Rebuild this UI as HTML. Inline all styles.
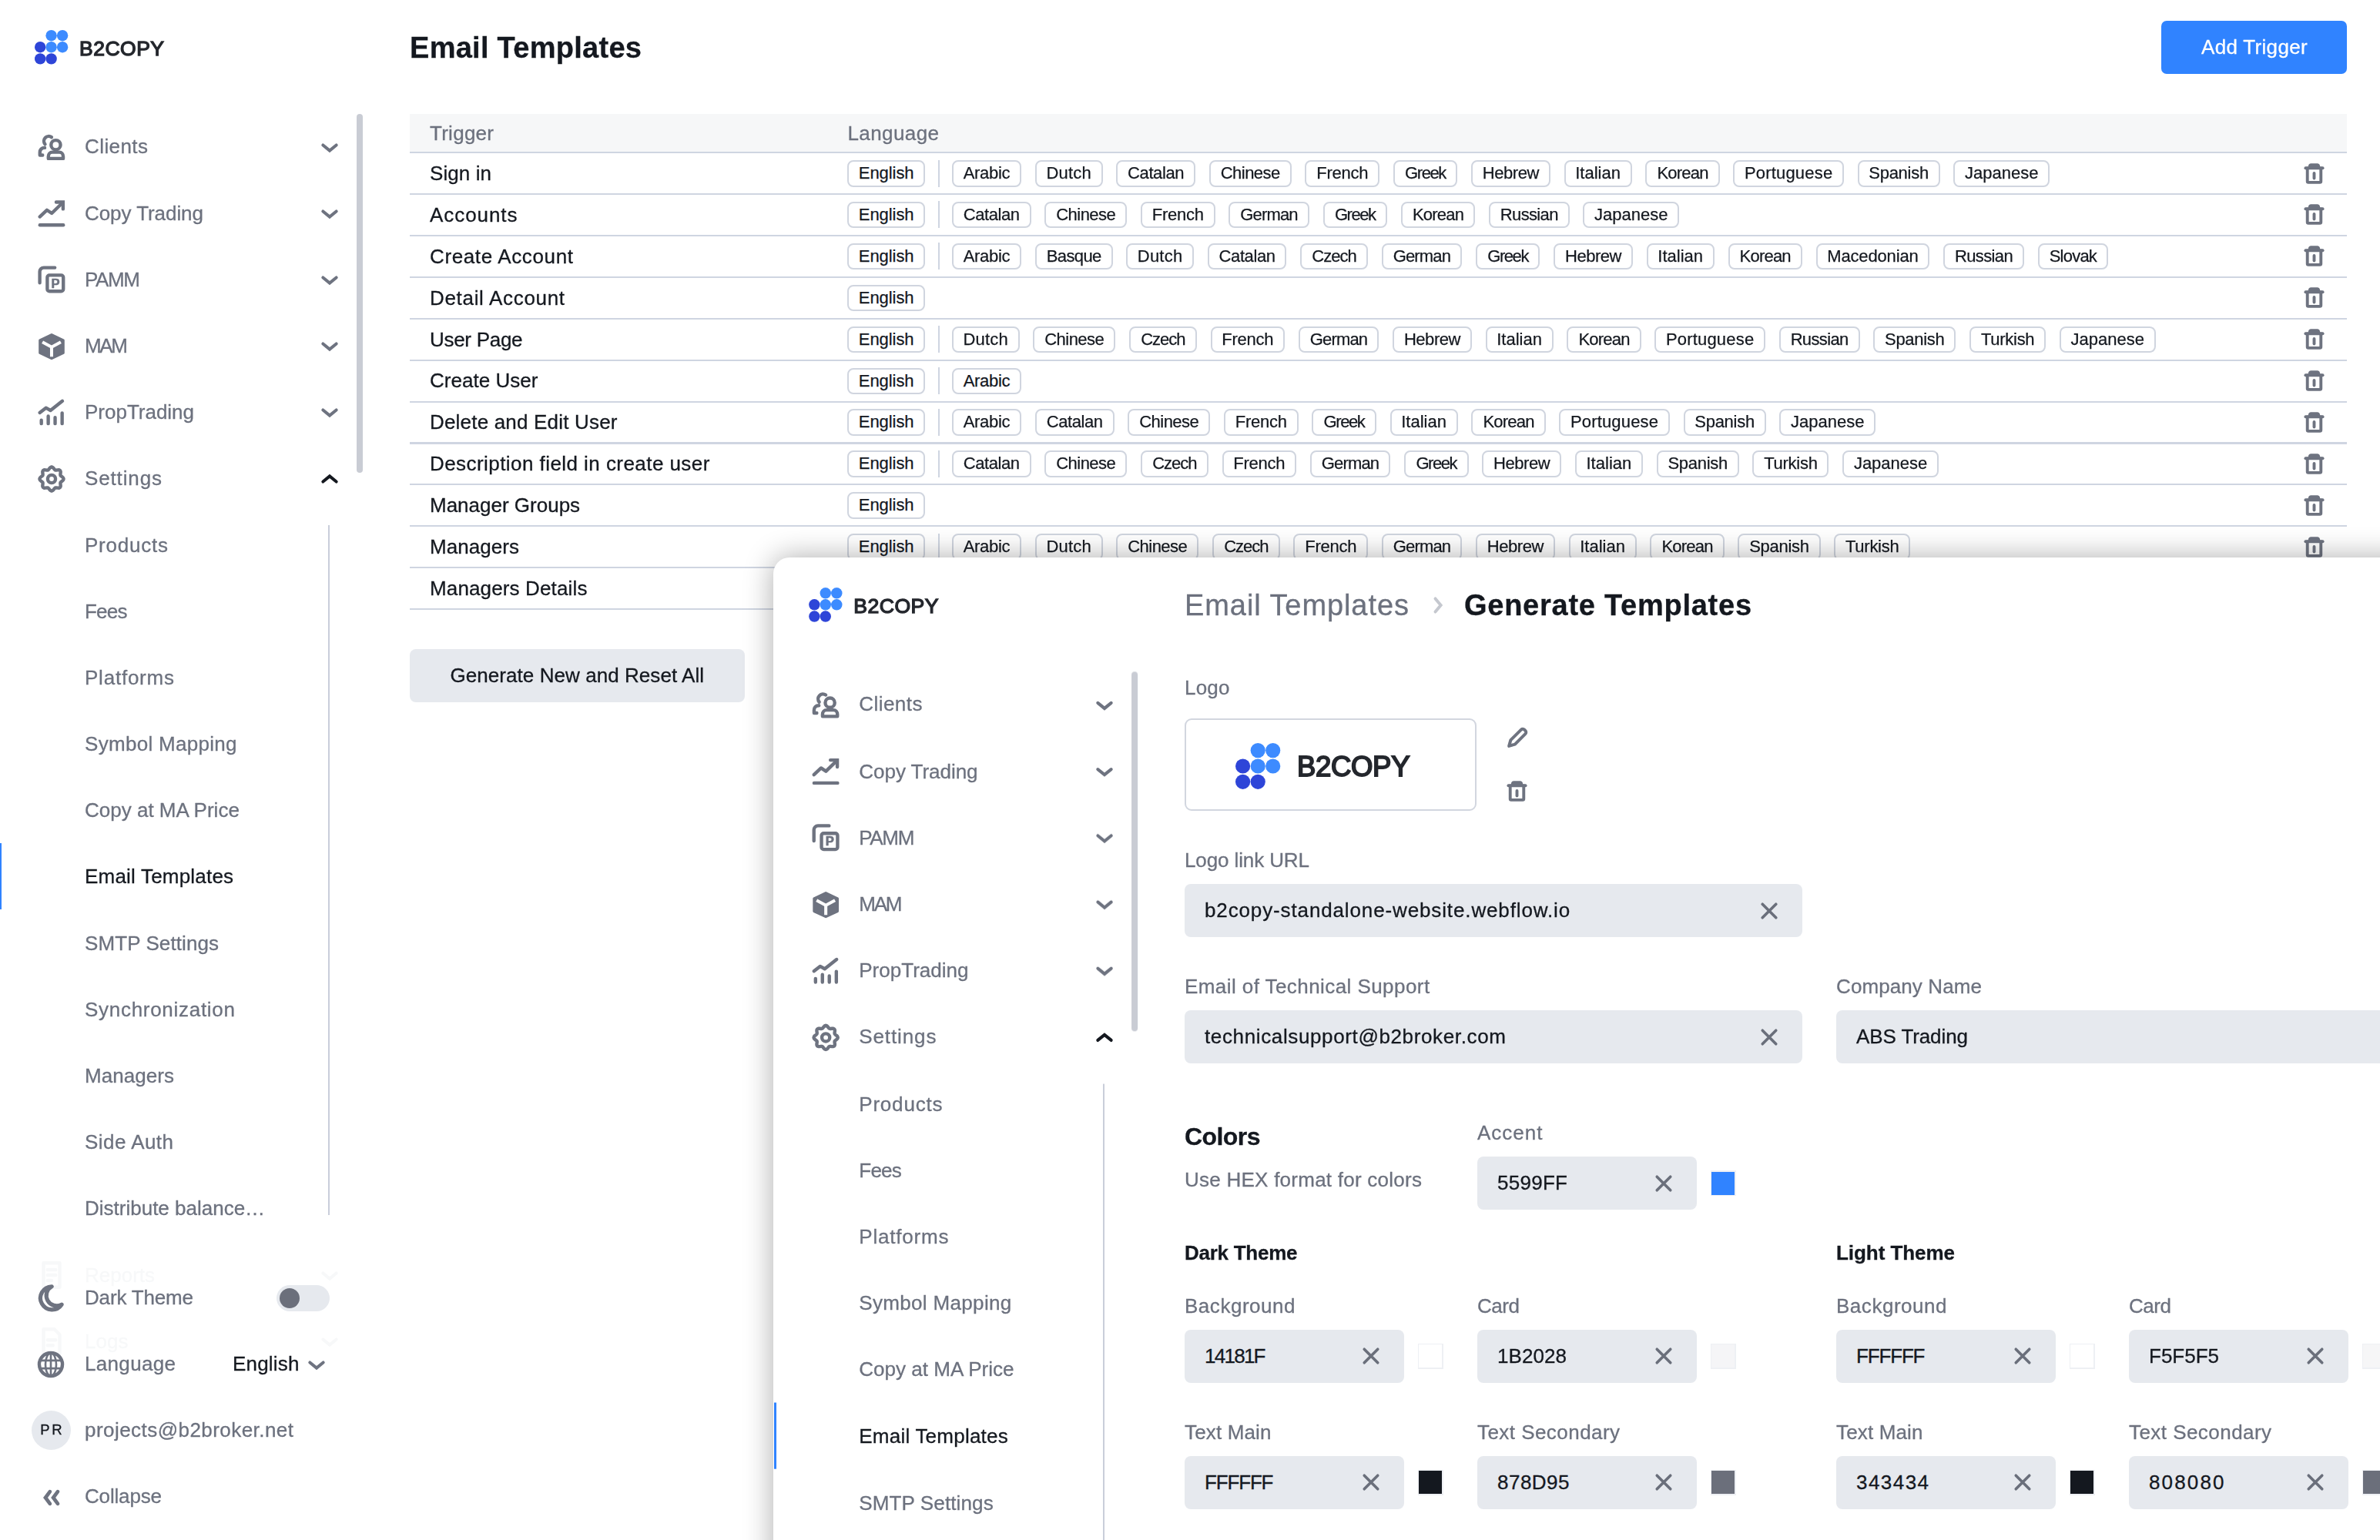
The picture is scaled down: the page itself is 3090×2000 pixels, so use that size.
<!DOCTYPE html>
<html lang="en"><head><meta charset="utf-8"><title>Email Templates</title><style>
html,body{margin:0;padding:0;background:#fff}
body{width:3090px;height:2000px;overflow:hidden;position:relative;font-family:"Liberation Sans",sans-serif}
.t{position:absolute;white-space:nowrap;height:40px;line-height:40px;-webkit-text-stroke:0.3px currentColor}
.b{position:absolute}
.i{position:absolute;overflow:visible}
.tag{position:absolute;box-sizing:border-box;height:34.5px;line-height:29px;border:2px solid #d0d5df;border-radius:8px;font-size:22px;color:#14181f;text-align:center;white-space:nowrap;background:#fff;-webkit-text-stroke:0.25px currentColor}
.popup{position:absolute;left:1004px;top:724px;width:2200px;height:1400px;background:#fff;border-radius:21px 0 0 0;box-shadow:0 0 38px rgba(0,0,0,.33);overflow:hidden}
.page{position:absolute;left:0;top:0;width:3090px;height:2000px;overflow:hidden;filter:blur(0.5px)}
</style></head>
<body><div class="page">
<div class="side"><svg class="i" style="left:44.5px;top:39.0px" width="43.3" height="44.5" viewBox="0 0 43.3 44.5"><circle cx="21.6" cy="7.2" r="7.2" fill="#3d8bff"/><circle cx="36.1" cy="7.2" r="7.2" fill="#3d8bff"/><circle cx="7.2" cy="22.2" r="7.2" fill="#2e45d8"/><circle cx="21.6" cy="22.2" r="7.2" fill="#3d8bff"/><circle cx="36.1" cy="22.2" r="7.2" fill="#3d8bff"/><circle cx="7.2" cy="37.4" r="7.2" fill="#2e45d8"/><circle cx="21.6" cy="37.4" r="7.2" fill="#2e45d8"/></svg><div class="t" style="left:103.0px;top:43.0px;font-size:26.5px;color:#24272d;letter-spacing:0.50px;-webkit-text-stroke:1.35px #24272d;">B2COPY</div><svg class="i" style="left:45.5px;top:170.0px" width="42" height="42" viewBox="0 0 24 24" fill="none" stroke="#6e7380" stroke-width="2.5" stroke-linecap="round" stroke-linejoin="round" ><circle cx="15.100" cy="10.400" r="3.500"/><path d="M9.600 20.500v-1.500c0-1.900 1.300-3.200 2.900-3.200h5.200c1.600 0 2.900 1.300 2.900 3.200v1.500z"/><path d="M11.960 4.650A3.600 3.600 0 0 0 7.140 9.910"/><path d="M6.900 12.500C4.500 12.500 3.300 14 3.300 16V18H5.300"/></svg><div class="t" style="left:110.0px;top:170.4px;font-size:26px;color:#6c717e;letter-spacing:0.42px;">Clients</div><svg class="i" style="left:410.2px;top:173.5px" width="36" height="36" viewBox="0 0 24 24" fill="none" stroke="#6e7380" stroke-width="2.75" stroke-linecap="round" stroke-linejoin="round" ><path d="M6.240 9.650L12 14.350L17.760 9.650" stroke-linejoin="miter"/></svg><svg class="i" style="left:45.5px;top:256.2px" width="42" height="42" viewBox="0 0 24 24" fill="none" stroke="#6e7380" stroke-width="2.5" stroke-linecap="round" stroke-linejoin="round" ><path d="M3.200 14.600l5.300-5 3.600 2.400 7.900-7.700"/><path d="M15.400 3.700h5.100v5.100" stroke-linejoin="miter"/><path d="M3.300 20.700h17.400"/></svg><div class="t" style="left:110.0px;top:256.6px;font-size:26px;color:#6c717e;letter-spacing:-0.06px;">Copy Trading</div><svg class="i" style="left:410.2px;top:259.7px" width="36" height="36" viewBox="0 0 24 24" fill="none" stroke="#6e7380" stroke-width="2.75" stroke-linecap="round" stroke-linejoin="round" ><path d="M6.240 9.650L12 14.350L17.760 9.650" stroke-linejoin="miter"/></svg><svg class="i" style="left:45.5px;top:342.4px" width="42" height="42" viewBox="0 0 24 24" fill="none" stroke="#6e7380" stroke-width="2.5" stroke-linecap="round" stroke-linejoin="round" ><path d="M3.2 14.4V6.2a3 3 0 0 1 3-3h8.2"/><rect x="8.8" y="8.8" width="11.9" height="11.9" rx="1.6"/><text x="14.900" y="18.050" text-anchor="middle" font-family="Liberation Sans, sans-serif" font-weight="700" font-size="9.500" fill="#6e7380" stroke="#6e7380" stroke-width="0.300">P</text></svg><div class="t" style="left:110.0px;top:342.8px;font-size:26px;color:#6c717e;letter-spacing:-1.36px;">PAMM</div><svg class="i" style="left:410.2px;top:345.9px" width="36" height="36" viewBox="0 0 24 24" fill="none" stroke="#6e7380" stroke-width="2.75" stroke-linecap="round" stroke-linejoin="round" ><path d="M6.240 9.650L12 14.350L17.760 9.650" stroke-linejoin="miter"/></svg><svg class="i" style="left:45.5px;top:428.5px" width="42" height="42" viewBox="0 0 24 24" fill="none" stroke="#6e7380" stroke-width="2.5" stroke-linecap="round" stroke-linejoin="round" ><path d="M12 3.200L20.700 7.400V16.800L12 20.900L3.300 16.800V7.400z" fill="#6e7380" stroke-width="1.800"/><path d="M5.200 8.650L12 12.400l6.800-3.750M12 12.400v7.200" stroke="#fff" stroke-width="2.300" stroke-linecap="butt" stroke-linejoin="miter"/></svg><div class="t" style="left:110.0px;top:429.0px;font-size:26px;color:#6c717e;letter-spacing:-2.33px;">MAM</div><svg class="i" style="left:410.2px;top:432.0px" width="36" height="36" viewBox="0 0 24 24" fill="none" stroke="#6e7380" stroke-width="2.75" stroke-linecap="round" stroke-linejoin="round" ><path d="M6.240 9.650L12 14.350L17.760 9.650" stroke-linejoin="miter"/></svg><svg class="i" style="left:45.5px;top:514.7px" width="42" height="42" viewBox="0 0 24 24" fill="none" stroke="#6e7380" stroke-width="2.5" stroke-linecap="round" stroke-linejoin="round" ><path d="M3.200 9.800l4.600-3.600 3.400 1.900 8.800-7.000" transform="translate(0 2.2)"/><path d="M4.400 17.600v2.500M9.500 14.600v5.500M14.600 15.600v4.500M19.800 12.200v7.900"/></svg><div class="t" style="left:110.0px;top:515.1px;font-size:26px;color:#6c717e;letter-spacing:-0.01px;">PropTrading</div><svg class="i" style="left:410.2px;top:518.2px" width="36" height="36" viewBox="0 0 24 24" fill="none" stroke="#6e7380" stroke-width="2.75" stroke-linecap="round" stroke-linejoin="round" ><path d="M6.240 9.650L12 14.350L17.760 9.650" stroke-linejoin="miter"/></svg><svg class="i" style="left:45.5px;top:600.9px" width="42" height="42" viewBox="0 0 24 24" fill="none" stroke="#6e7380" stroke-width="2.5" stroke-linecap="round" stroke-linejoin="round" ><path d="M12.00 3.10L12.85 3.41L13.56 4.15L14.14 4.95L14.72 5.44L15.47 5.51L16.44 5.35L17.48 5.32L18.29 5.71L18.68 6.52L18.65 7.56L18.49 8.53L18.56 9.28L19.05 9.86L19.85 10.44L20.59 11.15L20.90 12.00L20.59 12.85L19.85 13.56L19.05 14.14L18.56 14.72L18.49 15.47L18.65 16.44L18.68 17.48L18.29 18.29L17.48 18.68L16.44 18.65L15.47 18.49L14.72 18.56L14.14 19.05L13.56 19.85L12.85 20.59L12.00 20.90L11.15 20.59L10.44 19.85L9.86 19.05L9.28 18.56L8.53 18.49L7.56 18.65L6.52 18.68L5.71 18.29L5.32 17.48L5.35 16.44L5.51 15.47L5.44 14.72L4.95 14.14L4.15 13.56L3.41 12.85L3.10 12.00L3.41 11.15L4.15 10.44L4.95 9.86L5.44 9.28L5.51 8.53L5.35 7.56L5.32 6.52L5.71 5.71L6.52 5.32L7.56 5.35L8.53 5.51L9.28 5.44L9.86 4.95L10.44 4.15L11.15 3.41L12.00 3.10z"/><circle cx="12" cy="12" r="2.900"/></svg><div class="t" style="left:110.0px;top:601.3px;font-size:26px;color:#6c717e;letter-spacing:0.86px;">Settings</div><svg class="i" style="left:410.2px;top:604.4px" width="36" height="36" viewBox="0 0 24 24" fill="none" stroke="#14181f" stroke-width="2.75" stroke-linecap="round" stroke-linejoin="round" ><path d="M6.240 14.350L12 9.650L17.760 14.350" stroke-linejoin="miter"/></svg><div class="t" style="left:110.0px;top:687.5px;font-size:26px;color:#6c717e;letter-spacing:0.77px;">Products</div><div class="t" style="left:110.0px;top:773.7px;font-size:26px;color:#6c717e;letter-spacing:-0.77px;">Fees</div><div class="t" style="left:110.0px;top:859.9px;font-size:26px;color:#6c717e;letter-spacing:0.77px;">Platforms</div><div class="t" style="left:110.0px;top:946.0px;font-size:26px;color:#6c717e;letter-spacing:0.30px;">Symbol Mapping</div><div class="t" style="left:110.0px;top:1032.2px;font-size:26px;color:#6c717e;">Copy at MA Price</div><div class="t" style="left:110.0px;top:1118.4px;font-size:26px;color:#14181f;letter-spacing:0.20px;">Email Templates</div><div class="t" style="left:110.0px;top:1204.6px;font-size:26px;color:#6c717e;letter-spacing:0.09px;">SMTP Settings</div><div class="t" style="left:110.0px;top:1290.8px;font-size:26px;color:#6c717e;letter-spacing:0.71px;">Synchronization</div><div class="t" style="left:110.0px;top:1376.9px;font-size:26px;color:#6c717e;letter-spacing:0.05px;">Managers</div><div class="t" style="left:110.0px;top:1463.1px;font-size:26px;color:#6c717e;letter-spacing:0.46px;">Side Auth</div><div class="t" style="left:110.0px;top:1549.3px;font-size:26px;color:#6c717e;">Distribute balance…</div><svg class="i" style="left:45.5px;top:1635.1px" width="42" height="42" viewBox="0 0 24 24" fill="none" stroke="#f7f8f9" stroke-width="2.5" stroke-linecap="round" stroke-linejoin="round" ><path d="M6 3h12v18H6zM9 8h6M9 12h6M9 16h3"/></svg><div class="t" style="left:110.0px;top:1635.5px;font-size:26px;color:#f7f8f9;">Reports</div><svg class="i" style="left:410.2px;top:1638.6px" width="36" height="36" viewBox="0 0 24 24" fill="none" stroke="#f7f8f9" stroke-width="2.75" stroke-linecap="round" stroke-linejoin="round" ><path d="M6.240 9.650L12 14.350L17.760 9.650" stroke-linejoin="miter"/></svg><svg class="i" style="left:45.5px;top:1721.2px" width="42" height="42" viewBox="0 0 24 24" fill="none" stroke="#f7f8f9" stroke-width="2.5" stroke-linecap="round" stroke-linejoin="round" ><path d="M6 3h8l4 4v14H6zM9 11h6M9 15h4"/></svg><div class="t" style="left:110.0px;top:1721.7px;font-size:26px;color:#f7f8f9;">Logs</div><svg class="i" style="left:410.2px;top:1724.7px" width="36" height="36" viewBox="0 0 24 24" fill="none" stroke="#f7f8f9" stroke-width="2.75" stroke-linecap="round" stroke-linejoin="round" ><path d="M6.240 9.650L12 14.350L17.760 9.650" stroke-linejoin="miter"/></svg><div class="b" style="left:463.2px;top:148px;width:7.6px;height:466px;border-radius:4px;background:#c9ccd4"></div><div class="b" style="left:426.3px;top:682px;width:1.6px;height:896px;background:#c9ceda"></div><div class="b" style="left:0;top:1095px;width:2.2px;height:86px;background:#3083ff"></div><svg class="i" style="left:44.0px;top:1665.0px" width="42" height="42" viewBox="0 0 24 24" fill="none" stroke="#6e7380" stroke-width="3" stroke-linecap="round" stroke-linejoin="round" ><path d="M13.200 3.300a8.600 8.600 0 1 0 7.400 13.400a7.600 7.600 0 0 1-7.400-13.400z"/></svg><div class="t" style="left:110.0px;top:1665.4px;font-size:26px;color:#6c717e;letter-spacing:-0.17px;">Dark Theme</div><div class="b" style="left:359px;top:1669px;width:69px;height:34px;border-radius:17px;background:#e6e9ee"></div><div class="b" style="left:363.3px;top:1673px;width:26px;height:26px;border-radius:13px;background:#6b6f7b"></div><svg class="i" style="left:45.0px;top:1751.0px" width="42" height="42" viewBox="0 0 24 24" fill="none" stroke="#6e7380" stroke-width="2.5" stroke-linecap="round" stroke-linejoin="round" ><circle cx="12" cy="12" r="8.600"/><path d="M12 3.500v17M4.200 9.100h15.600M4.200 14.900h15.600" stroke-width="1.500" stroke-linecap="butt"/><ellipse cx="12" cy="12" rx="4" ry="8.500" stroke-width="1.500"/></svg><div class="t" style="left:110.0px;top:1751.4px;font-size:26px;color:#6c717e;letter-spacing:0.33px;">Language</div><div class="t" style="left:302.0px;top:1751.4px;font-size:26px;color:#14181f;letter-spacing:0.20px;">English</div><svg class="i" style="left:393.0px;top:1754.5px" width="36" height="36" viewBox="0 0 24 24" fill="none" stroke="#6e7380" stroke-width="2.75" stroke-linecap="round" stroke-linejoin="round" ><path d="M6.240 9.650L12 14.350L17.760 9.650" stroke-linejoin="miter"/></svg><div class="b" style="left:40.8px;top:1832.3px;width:51px;height:51px;border-radius:26px;background:#e6e9ee"></div><div class="t" style="left:52.3px;top:1837.3px;font-size:18.5px;color:#14181f;letter-spacing:2.60px;">PR</div><div class="t" style="left:110.0px;top:1837.4px;font-size:26px;color:#6c717e;letter-spacing:0.45px;">projects@b2broker.net</div><svg class="i" style="left:47.5px;top:1925.7px" width="38" height="38" viewBox="0 0 24 24" fill="none" stroke="#6e7380" stroke-width="3.0" stroke-linecap="round" stroke-linejoin="round" ><path d="M10.650 7.050L6.950 12l3.700 4.950M17.050 7.050L13.350 12l3.700 4.950" stroke-linejoin="miter"/></svg><div class="t" style="left:110.0px;top:1923.4px;font-size:26px;color:#6c717e;letter-spacing:-0.17px;">Collapse</div></div>
<div class="main"><div class="t" style="left:532.0px;top:41.8px;font-size:38px;color:#14181f;font-weight:700;letter-spacing:0.28px;">Email Templates</div><div class="b" style="left:2806px;top:27px;width:241.4px;height:69px;border-radius:7px;background:#3083ff"></div><div class="t" style="left:2858.0px;top:41.4px;font-size:26px;color:#fff;letter-spacing:0.32px;">Add Trigger</div><div class="b" style="left:531.7px;top:148px;width:2515.7px;height:50px;background:#f6f7f8"></div><div class="t" style="left:558.0px;top:152.7px;font-size:26px;color:#6c717e;letter-spacing:0.27px;">Trigger</div><div class="t" style="left:1100.5px;top:152.7px;font-size:26px;color:#6c717e;letter-spacing:0.40px;">Language</div><div class="b" style="left:531.7px;top:197.3px;width:2515.7px;height:2.2px;background:#cfd5e1"></div><div class="t" style="left:558.0px;top:204.9px;font-size:26px;color:#14181f;letter-spacing:0.08px;">Sign in</div><div class="b" style="left:531.7px;top:251.0px;width:2515.7px;height:2.2px;background:#cfd5e1"></div><div class="tag" style="left:1100.1px;top:208.0px;width:101.2px;letter-spacing:-0.06px">English</div><div class="b" style="left:1217.6px;top:207.5px;width:2px;height:35px;background:#cfd5e1"></div><div class="tag" style="left:1235.8px;top:208.0px;width:90.3px;letter-spacing:-0.29px">Arabic</div><div class="tag" style="left:1343.8px;top:208.0px;width:87.8px;letter-spacing:0.23px">Dutch</div><div class="tag" style="left:1449.2px;top:208.0px;width:102.8px;letter-spacing:-0.40px">Catalan</div><div class="tag" style="left:1569.7px;top:208.0px;width:107.1px;letter-spacing:-0.50px">Chinese</div><div class="tag" style="left:1694.4px;top:208.0px;width:96.6px;letter-spacing:-0.25px">French</div><div class="tag" style="left:1808.7px;top:208.0px;width:83.6px;letter-spacing:-1.43px">Greek</div><div class="tag" style="left:1909.9px;top:208.0px;width:102.9px;letter-spacing:-0.46px">Hebrew</div><div class="tag" style="left:2030.5px;top:208.0px;width:88.2px;letter-spacing:0.02px">Italian</div><div class="tag" style="left:2136.3px;top:208.0px;width:96.4px;letter-spacing:-0.79px">Korean</div><div class="tag" style="left:2250.4px;top:208.0px;width:143.5px;letter-spacing:0.18px">Portuguese</div><div class="tag" style="left:2411.5px;top:208.0px;width:107.2px;letter-spacing:-0.28px">Spanish</div><div class="tag" style="left:2536.4px;top:208.0px;width:124.8px;letter-spacing:-0.00px">Japanese</div><svg class="i" style="left:2988.5px;top:209.5px" width="31" height="31" viewBox="0 0 24 24" fill="none" stroke="#6e7380" stroke-width="3.0" stroke-linecap="round" stroke-linejoin="round" ><path d="M3.400 6.400h17.200"/><path d="M7.600 5.400V4.400a1.200 1.200 0 0 1 1.200-1.200h6.400a1.200 1.200 0 0 1 1.200 1.200v1" fill="#6e7380"/><path d="M5.200 6.600v13.200a1 1 0 0 0 1 1h11.600a1 1 0 0 0 1-1V6.600"/><path d="M12 11.600v5" /></svg><div class="t" style="left:558.0px;top:258.8px;font-size:26px;color:#14181f;letter-spacing:0.94px;">Accounts</div><div class="b" style="left:531.7px;top:304.9px;width:2515.7px;height:2.2px;background:#cfd5e1"></div><div class="tag" style="left:1100.1px;top:261.9px;width:101.2px;letter-spacing:-0.06px">English</div><div class="b" style="left:1217.6px;top:261.4px;width:2px;height:35px;background:#cfd5e1"></div><div class="tag" style="left:1235.8px;top:261.9px;width:102.8px;letter-spacing:-0.40px">Catalan</div><div class="tag" style="left:1356.2px;top:261.9px;width:107.1px;letter-spacing:-0.50px">Chinese</div><div class="tag" style="left:1481.0px;top:261.9px;width:96.6px;letter-spacing:-0.25px">French</div><div class="tag" style="left:1595.2px;top:261.9px;width:104.6px;letter-spacing:-0.85px">German</div><div class="tag" style="left:1717.5px;top:261.9px;width:83.6px;letter-spacing:-1.43px">Greek</div><div class="tag" style="left:1818.8px;top:261.9px;width:96.4px;letter-spacing:-0.79px">Korean</div><div class="tag" style="left:1932.8px;top:261.9px;width:105.0px;letter-spacing:-0.65px">Russian</div><div class="tag" style="left:2055.4px;top:261.9px;width:124.8px;letter-spacing:-0.00px">Japanese</div><svg class="i" style="left:2988.5px;top:263.4px" width="31" height="31" viewBox="0 0 24 24" fill="none" stroke="#6e7380" stroke-width="3.0" stroke-linecap="round" stroke-linejoin="round" ><path d="M3.400 6.400h17.200"/><path d="M7.600 5.400V4.400a1.200 1.200 0 0 1 1.200-1.200h6.400a1.200 1.200 0 0 1 1.200 1.200v1" fill="#6e7380"/><path d="M5.200 6.600v13.200a1 1 0 0 0 1 1h11.600a1 1 0 0 0 1-1V6.600"/><path d="M12 11.600v5" /></svg><div class="t" style="left:558.0px;top:312.7px;font-size:26px;color:#14181f;letter-spacing:0.63px;">Create Account</div><div class="b" style="left:531.7px;top:358.8px;width:2515.7px;height:2.2px;background:#cfd5e1"></div><div class="tag" style="left:1100.1px;top:315.8px;width:101.2px;letter-spacing:-0.06px">English</div><div class="b" style="left:1217.6px;top:315.3px;width:2px;height:35px;background:#cfd5e1"></div><div class="tag" style="left:1235.8px;top:315.8px;width:90.3px;letter-spacing:-0.29px">Arabic</div><div class="tag" style="left:1343.8px;top:315.8px;width:100.8px;letter-spacing:-0.64px">Basque</div><div class="tag" style="left:1462.2px;top:315.8px;width:87.8px;letter-spacing:0.23px">Dutch</div><div class="tag" style="left:1567.7px;top:315.8px;width:102.8px;letter-spacing:-0.40px">Catalan</div><div class="tag" style="left:1688.1px;top:315.8px;width:87.8px;letter-spacing:-0.99px">Czech</div><div class="tag" style="left:1793.6px;top:315.8px;width:104.6px;letter-spacing:-0.85px">German</div><div class="tag" style="left:1915.8px;top:315.8px;width:83.6px;letter-spacing:-1.43px">Greek</div><div class="tag" style="left:2017.1px;top:315.8px;width:102.9px;letter-spacing:-0.46px">Hebrew</div><div class="tag" style="left:2137.6px;top:315.8px;width:88.2px;letter-spacing:0.02px">Italian</div><div class="tag" style="left:2243.5px;top:315.8px;width:96.4px;letter-spacing:-0.79px">Korean</div><div class="tag" style="left:2357.5px;top:315.8px;width:147.8px;letter-spacing:-0.16px">Macedonian</div><div class="tag" style="left:2523.0px;top:315.8px;width:105.0px;letter-spacing:-0.65px">Russian</div><div class="tag" style="left:2645.6px;top:315.8px;width:91.6px;letter-spacing:-0.77px">Slovak</div><svg class="i" style="left:2988.5px;top:317.3px" width="31" height="31" viewBox="0 0 24 24" fill="none" stroke="#6e7380" stroke-width="3.0" stroke-linecap="round" stroke-linejoin="round" ><path d="M3.400 6.400h17.200"/><path d="M7.600 5.400V4.400a1.200 1.200 0 0 1 1.200-1.200h6.400a1.200 1.200 0 0 1 1.200 1.200v1" fill="#6e7380"/><path d="M5.200 6.600v13.200a1 1 0 0 0 1 1h11.600a1 1 0 0 0 1-1V6.600"/><path d="M12 11.600v5" /></svg><div class="t" style="left:558.0px;top:366.6px;font-size:26px;color:#14181f;letter-spacing:0.68px;">Detail Account</div><div class="b" style="left:531.7px;top:412.7px;width:2515.7px;height:2.2px;background:#cfd5e1"></div><div class="tag" style="left:1100.1px;top:369.7px;width:101.2px;letter-spacing:-0.06px">English</div><svg class="i" style="left:2988.5px;top:371.2px" width="31" height="31" viewBox="0 0 24 24" fill="none" stroke="#6e7380" stroke-width="3.0" stroke-linecap="round" stroke-linejoin="round" ><path d="M3.400 6.400h17.200"/><path d="M7.600 5.400V4.400a1.200 1.200 0 0 1 1.200-1.200h6.400a1.200 1.200 0 0 1 1.200 1.200v1" fill="#6e7380"/><path d="M5.200 6.600v13.200a1 1 0 0 0 1 1h11.600a1 1 0 0 0 1-1V6.600"/><path d="M12 11.600v5" /></svg><div class="t" style="left:558.0px;top:420.5px;font-size:26px;color:#14181f;letter-spacing:-0.29px;">User Page</div><div class="b" style="left:531.7px;top:466.6px;width:2515.7px;height:2.2px;background:#cfd5e1"></div><div class="tag" style="left:1100.1px;top:423.6px;width:101.2px;letter-spacing:-0.06px">English</div><div class="b" style="left:1217.6px;top:423.1px;width:2px;height:35px;background:#cfd5e1"></div><div class="tag" style="left:1235.8px;top:423.6px;width:87.8px;letter-spacing:0.23px">Dutch</div><div class="tag" style="left:1341.2px;top:423.6px;width:107.1px;letter-spacing:-0.50px">Chinese</div><div class="tag" style="left:1466.0px;top:423.6px;width:87.8px;letter-spacing:-0.99px">Czech</div><div class="tag" style="left:1571.5px;top:423.6px;width:96.6px;letter-spacing:-0.25px">French</div><div class="tag" style="left:1685.7px;top:423.6px;width:104.6px;letter-spacing:-0.85px">German</div><div class="tag" style="left:1808.0px;top:423.6px;width:102.9px;letter-spacing:-0.46px">Hebrew</div><div class="tag" style="left:1928.5px;top:423.6px;width:88.2px;letter-spacing:0.02px">Italian</div><div class="tag" style="left:2034.3px;top:423.6px;width:96.4px;letter-spacing:-0.79px">Korean</div><div class="tag" style="left:2148.4px;top:423.6px;width:143.5px;letter-spacing:0.18px">Portuguese</div><div class="tag" style="left:2309.6px;top:423.6px;width:105.0px;letter-spacing:-0.65px">Russian</div><div class="tag" style="left:2432.2px;top:423.6px;width:107.2px;letter-spacing:-0.28px">Spanish</div><div class="tag" style="left:2557.1px;top:423.6px;width:99.1px;letter-spacing:-0.27px">Turkish</div><div class="tag" style="left:2673.8px;top:423.6px;width:124.8px;letter-spacing:-0.00px">Japanese</div><svg class="i" style="left:2988.5px;top:425.1px" width="31" height="31" viewBox="0 0 24 24" fill="none" stroke="#6e7380" stroke-width="3.0" stroke-linecap="round" stroke-linejoin="round" ><path d="M3.400 6.400h17.200"/><path d="M7.600 5.400V4.400a1.200 1.200 0 0 1 1.200-1.200h6.400a1.200 1.200 0 0 1 1.200 1.200v1" fill="#6e7380"/><path d="M5.200 6.600v13.200a1 1 0 0 0 1 1h11.600a1 1 0 0 0 1-1V6.600"/><path d="M12 11.600v5" /></svg><div class="t" style="left:558.0px;top:474.4px;font-size:26px;color:#14181f;letter-spacing:0.03px;">Create User</div><div class="b" style="left:531.7px;top:520.5px;width:2515.7px;height:2.2px;background:#cfd5e1"></div><div class="tag" style="left:1100.1px;top:477.5px;width:101.2px;letter-spacing:-0.06px">English</div><div class="b" style="left:1217.6px;top:477.0px;width:2px;height:35px;background:#cfd5e1"></div><div class="tag" style="left:1235.8px;top:477.5px;width:90.3px;letter-spacing:-0.29px">Arabic</div><svg class="i" style="left:2988.5px;top:479.0px" width="31" height="31" viewBox="0 0 24 24" fill="none" stroke="#6e7380" stroke-width="3.0" stroke-linecap="round" stroke-linejoin="round" ><path d="M3.400 6.400h17.200"/><path d="M7.600 5.400V4.400a1.200 1.200 0 0 1 1.200-1.200h6.400a1.200 1.200 0 0 1 1.200 1.200v1" fill="#6e7380"/><path d="M5.200 6.600v13.200a1 1 0 0 0 1 1h11.600a1 1 0 0 0 1-1V6.600"/><path d="M12 11.600v5" /></svg><div class="t" style="left:558.0px;top:528.3px;font-size:26px;color:#14181f;letter-spacing:0.19px;">Delete and Edit User</div><div class="b" style="left:531.7px;top:574.4px;width:2515.7px;height:2.2px;background:#cfd5e1"></div><div class="tag" style="left:1100.1px;top:531.4px;width:101.2px;letter-spacing:-0.06px">English</div><div class="b" style="left:1217.6px;top:530.9px;width:2px;height:35px;background:#cfd5e1"></div><div class="tag" style="left:1235.8px;top:531.4px;width:90.3px;letter-spacing:-0.29px">Arabic</div><div class="tag" style="left:1343.8px;top:531.4px;width:102.8px;letter-spacing:-0.40px">Catalan</div><div class="tag" style="left:1464.2px;top:531.4px;width:107.1px;letter-spacing:-0.50px">Chinese</div><div class="tag" style="left:1589.0px;top:531.4px;width:96.6px;letter-spacing:-0.25px">French</div><div class="tag" style="left:1703.2px;top:531.4px;width:83.6px;letter-spacing:-1.43px">Greek</div><div class="tag" style="left:1804.5px;top:531.4px;width:88.2px;letter-spacing:0.02px">Italian</div><div class="tag" style="left:1910.3px;top:531.4px;width:96.4px;letter-spacing:-0.79px">Korean</div><div class="tag" style="left:2024.3px;top:531.4px;width:143.5px;letter-spacing:0.18px">Portuguese</div><div class="tag" style="left:2185.5px;top:531.4px;width:107.2px;letter-spacing:-0.28px">Spanish</div><div class="tag" style="left:2310.3px;top:531.4px;width:124.8px;letter-spacing:-0.00px">Japanese</div><svg class="i" style="left:2988.5px;top:532.9px" width="31" height="31" viewBox="0 0 24 24" fill="none" stroke="#6e7380" stroke-width="3.0" stroke-linecap="round" stroke-linejoin="round" ><path d="M3.400 6.400h17.200"/><path d="M7.600 5.400V4.400a1.200 1.200 0 0 1 1.200-1.200h6.400a1.200 1.200 0 0 1 1.200 1.200v1" fill="#6e7380"/><path d="M5.200 6.600v13.200a1 1 0 0 0 1 1h11.600a1 1 0 0 0 1-1V6.600"/><path d="M12 11.600v5" /></svg><div class="t" style="left:558.0px;top:582.2px;font-size:26px;color:#14181f;letter-spacing:0.44px;">Description field in create user</div><div class="b" style="left:531.7px;top:628.3px;width:2515.7px;height:2.2px;background:#cfd5e1"></div><div class="tag" style="left:1100.1px;top:585.3px;width:101.2px;letter-spacing:-0.06px">English</div><div class="b" style="left:1217.6px;top:584.8px;width:2px;height:35px;background:#cfd5e1"></div><div class="tag" style="left:1235.8px;top:585.3px;width:102.8px;letter-spacing:-0.40px">Catalan</div><div class="tag" style="left:1356.2px;top:585.3px;width:107.1px;letter-spacing:-0.50px">Chinese</div><div class="tag" style="left:1481.0px;top:585.3px;width:87.8px;letter-spacing:-0.99px">Czech</div><div class="tag" style="left:1586.5px;top:585.3px;width:96.6px;letter-spacing:-0.25px">French</div><div class="tag" style="left:1700.7px;top:585.3px;width:104.6px;letter-spacing:-0.85px">German</div><div class="tag" style="left:1823.0px;top:585.3px;width:83.6px;letter-spacing:-1.43px">Greek</div><div class="tag" style="left:1924.2px;top:585.3px;width:102.9px;letter-spacing:-0.46px">Hebrew</div><div class="tag" style="left:2044.8px;top:585.3px;width:88.2px;letter-spacing:0.02px">Italian</div><div class="tag" style="left:2150.6px;top:585.3px;width:107.2px;letter-spacing:-0.28px">Spanish</div><div class="tag" style="left:2275.4px;top:585.3px;width:99.1px;letter-spacing:-0.27px">Turkish</div><div class="tag" style="left:2392.2px;top:585.3px;width:124.8px;letter-spacing:-0.00px">Japanese</div><svg class="i" style="left:2988.5px;top:586.8px" width="31" height="31" viewBox="0 0 24 24" fill="none" stroke="#6e7380" stroke-width="3.0" stroke-linecap="round" stroke-linejoin="round" ><path d="M3.400 6.400h17.200"/><path d="M7.600 5.400V4.400a1.200 1.200 0 0 1 1.200-1.200h6.400a1.200 1.200 0 0 1 1.200 1.200v1" fill="#6e7380"/><path d="M5.200 6.600v13.200a1 1 0 0 0 1 1h11.600a1 1 0 0 0 1-1V6.600"/><path d="M12 11.600v5" /></svg><div class="t" style="left:558.0px;top:636.1px;font-size:26px;color:#14181f;">Manager Groups</div><div class="b" style="left:531.7px;top:682.2px;width:2515.7px;height:2.2px;background:#cfd5e1"></div><div class="tag" style="left:1100.1px;top:639.2px;width:101.2px;letter-spacing:-0.06px">English</div><svg class="i" style="left:2988.5px;top:640.7px" width="31" height="31" viewBox="0 0 24 24" fill="none" stroke="#6e7380" stroke-width="3.0" stroke-linecap="round" stroke-linejoin="round" ><path d="M3.400 6.400h17.200"/><path d="M7.600 5.400V4.400a1.200 1.200 0 0 1 1.200-1.200h6.400a1.200 1.200 0 0 1 1.200 1.200v1" fill="#6e7380"/><path d="M5.200 6.600v13.200a1 1 0 0 0 1 1h11.600a1 1 0 0 0 1-1V6.600"/><path d="M12 11.600v5" /></svg><div class="t" style="left:558.0px;top:690.0px;font-size:26px;color:#14181f;letter-spacing:0.05px;">Managers</div><div class="b" style="left:531.7px;top:736.1px;width:2515.7px;height:2.2px;background:#cfd5e1"></div><div class="tag" style="left:1100.1px;top:693.1px;width:101.2px;letter-spacing:-0.06px">English</div><div class="b" style="left:1217.6px;top:692.6px;width:2px;height:35px;background:#cfd5e1"></div><div class="tag" style="left:1235.8px;top:693.1px;width:90.3px;letter-spacing:-0.29px">Arabic</div><div class="tag" style="left:1343.8px;top:693.1px;width:87.8px;letter-spacing:0.23px">Dutch</div><div class="tag" style="left:1449.2px;top:693.1px;width:107.1px;letter-spacing:-0.50px">Chinese</div><div class="tag" style="left:1574.0px;top:693.1px;width:87.8px;letter-spacing:-0.99px">Czech</div><div class="tag" style="left:1679.4px;top:693.1px;width:96.6px;letter-spacing:-0.25px">French</div><div class="tag" style="left:1793.7px;top:693.1px;width:104.6px;letter-spacing:-0.85px">German</div><div class="tag" style="left:1915.9px;top:693.1px;width:102.9px;letter-spacing:-0.46px">Hebrew</div><div class="tag" style="left:2036.5px;top:693.1px;width:88.2px;letter-spacing:0.02px">Italian</div><div class="tag" style="left:2142.3px;top:693.1px;width:96.4px;letter-spacing:-0.79px">Korean</div><div class="tag" style="left:2256.4px;top:693.1px;width:107.2px;letter-spacing:-0.28px">Spanish</div><div class="tag" style="left:2381.2px;top:693.1px;width:99.1px;letter-spacing:-0.27px">Turkish</div><svg class="i" style="left:2988.5px;top:694.6px" width="31" height="31" viewBox="0 0 24 24" fill="none" stroke="#6e7380" stroke-width="3.0" stroke-linecap="round" stroke-linejoin="round" ><path d="M3.400 6.400h17.200"/><path d="M7.600 5.400V4.400a1.200 1.200 0 0 1 1.200-1.200h6.400a1.200 1.200 0 0 1 1.200 1.200v1" fill="#6e7380"/><path d="M5.200 6.600v13.200a1 1 0 0 0 1 1h11.600a1 1 0 0 0 1-1V6.600"/><path d="M12 11.600v5" /></svg><div class="t" style="left:558.0px;top:743.9px;font-size:26px;color:#14181f;letter-spacing:0.14px;">Managers Details</div><div class="b" style="left:531.7px;top:790.0px;width:2515.7px;height:2.2px;background:#cfd5e1"></div><svg class="i" style="left:2988.5px;top:748.5px" width="31" height="31" viewBox="0 0 24 24" fill="none" stroke="#6e7380" stroke-width="3.0" stroke-linecap="round" stroke-linejoin="round" ><path d="M3.400 6.400h17.200"/><path d="M7.600 5.400V4.400a1.200 1.200 0 0 1 1.200-1.200h6.400a1.200 1.200 0 0 1 1.200 1.200v1" fill="#6e7380"/><path d="M5.200 6.600v13.200a1 1 0 0 0 1 1h11.600a1 1 0 0 0 1-1V6.600"/><path d="M12 11.600v5" /></svg><div class="b" style="left:531.7px;top:843.3px;width:435px;height:68.6px;border-radius:8px;background:#e6e9ee"></div><div class="t" style="left:584.5px;top:857.4px;font-size:26px;color:#14181f;letter-spacing:0.06px;">Generate New and Reset All</div></div>
<div class="popup"><div class="side" style="position:absolute;left:0.6px;top:-0.4px;transform-origin:0 0;transform:scale(1.0023)"><svg class="i" style="left:44.5px;top:39.0px" width="43.3" height="44.5" viewBox="0 0 43.3 44.5"><circle cx="21.6" cy="7.2" r="7.2" fill="#3d8bff"/><circle cx="36.1" cy="7.2" r="7.2" fill="#3d8bff"/><circle cx="7.2" cy="22.2" r="7.2" fill="#2e45d8"/><circle cx="21.6" cy="22.2" r="7.2" fill="#3d8bff"/><circle cx="36.1" cy="22.2" r="7.2" fill="#3d8bff"/><circle cx="7.2" cy="37.4" r="7.2" fill="#2e45d8"/><circle cx="21.6" cy="37.4" r="7.2" fill="#2e45d8"/></svg><div class="t" style="left:103.0px;top:43.0px;font-size:26.5px;color:#24272d;letter-spacing:0.50px;-webkit-text-stroke:1.35px #24272d;">B2COPY</div><svg class="i" style="left:45.5px;top:170.0px" width="42" height="42" viewBox="0 0 24 24" fill="none" stroke="#6e7380" stroke-width="2.5" stroke-linecap="round" stroke-linejoin="round" ><circle cx="15.100" cy="10.400" r="3.500"/><path d="M9.600 20.500v-1.500c0-1.900 1.300-3.200 2.900-3.200h5.200c1.600 0 2.900 1.300 2.900 3.200v1.500z"/><path d="M11.960 4.650A3.600 3.600 0 0 0 7.140 9.910"/><path d="M6.900 12.500C4.500 12.500 3.300 14 3.300 16V18H5.300"/></svg><div class="t" style="left:110.0px;top:170.4px;font-size:26px;color:#6c717e;letter-spacing:0.42px;">Clients</div><svg class="i" style="left:410.2px;top:173.5px" width="36" height="36" viewBox="0 0 24 24" fill="none" stroke="#6e7380" stroke-width="2.75" stroke-linecap="round" stroke-linejoin="round" ><path d="M6.240 9.650L12 14.350L17.760 9.650" stroke-linejoin="miter"/></svg><svg class="i" style="left:45.5px;top:256.2px" width="42" height="42" viewBox="0 0 24 24" fill="none" stroke="#6e7380" stroke-width="2.5" stroke-linecap="round" stroke-linejoin="round" ><path d="M3.200 14.600l5.300-5 3.600 2.400 7.900-7.700"/><path d="M15.400 3.700h5.100v5.100" stroke-linejoin="miter"/><path d="M3.300 20.700h17.400"/></svg><div class="t" style="left:110.0px;top:256.6px;font-size:26px;color:#6c717e;letter-spacing:-0.06px;">Copy Trading</div><svg class="i" style="left:410.2px;top:259.7px" width="36" height="36" viewBox="0 0 24 24" fill="none" stroke="#6e7380" stroke-width="2.75" stroke-linecap="round" stroke-linejoin="round" ><path d="M6.240 9.650L12 14.350L17.760 9.650" stroke-linejoin="miter"/></svg><svg class="i" style="left:45.5px;top:342.4px" width="42" height="42" viewBox="0 0 24 24" fill="none" stroke="#6e7380" stroke-width="2.5" stroke-linecap="round" stroke-linejoin="round" ><path d="M3.2 14.4V6.2a3 3 0 0 1 3-3h8.2"/><rect x="8.8" y="8.8" width="11.9" height="11.9" rx="1.6"/><text x="14.900" y="18.050" text-anchor="middle" font-family="Liberation Sans, sans-serif" font-weight="700" font-size="9.500" fill="#6e7380" stroke="#6e7380" stroke-width="0.300">P</text></svg><div class="t" style="left:110.0px;top:342.8px;font-size:26px;color:#6c717e;letter-spacing:-1.36px;">PAMM</div><svg class="i" style="left:410.2px;top:345.9px" width="36" height="36" viewBox="0 0 24 24" fill="none" stroke="#6e7380" stroke-width="2.75" stroke-linecap="round" stroke-linejoin="round" ><path d="M6.240 9.650L12 14.350L17.760 9.650" stroke-linejoin="miter"/></svg><svg class="i" style="left:45.5px;top:428.5px" width="42" height="42" viewBox="0 0 24 24" fill="none" stroke="#6e7380" stroke-width="2.5" stroke-linecap="round" stroke-linejoin="round" ><path d="M12 3.200L20.700 7.400V16.800L12 20.900L3.300 16.800V7.400z" fill="#6e7380" stroke-width="1.800"/><path d="M5.200 8.650L12 12.400l6.800-3.750M12 12.400v7.200" stroke="#fff" stroke-width="2.300" stroke-linecap="butt" stroke-linejoin="miter"/></svg><div class="t" style="left:110.0px;top:429.0px;font-size:26px;color:#6c717e;letter-spacing:-2.33px;">MAM</div><svg class="i" style="left:410.2px;top:432.0px" width="36" height="36" viewBox="0 0 24 24" fill="none" stroke="#6e7380" stroke-width="2.75" stroke-linecap="round" stroke-linejoin="round" ><path d="M6.240 9.650L12 14.350L17.760 9.650" stroke-linejoin="miter"/></svg><svg class="i" style="left:45.5px;top:514.7px" width="42" height="42" viewBox="0 0 24 24" fill="none" stroke="#6e7380" stroke-width="2.5" stroke-linecap="round" stroke-linejoin="round" ><path d="M3.200 9.800l4.600-3.600 3.400 1.900 8.800-7.000" transform="translate(0 2.2)"/><path d="M4.400 17.600v2.500M9.500 14.600v5.500M14.600 15.600v4.500M19.800 12.200v7.900"/></svg><div class="t" style="left:110.0px;top:515.1px;font-size:26px;color:#6c717e;letter-spacing:-0.01px;">PropTrading</div><svg class="i" style="left:410.2px;top:518.2px" width="36" height="36" viewBox="0 0 24 24" fill="none" stroke="#6e7380" stroke-width="2.75" stroke-linecap="round" stroke-linejoin="round" ><path d="M6.240 9.650L12 14.350L17.760 9.650" stroke-linejoin="miter"/></svg><svg class="i" style="left:45.5px;top:600.9px" width="42" height="42" viewBox="0 0 24 24" fill="none" stroke="#6e7380" stroke-width="2.5" stroke-linecap="round" stroke-linejoin="round" ><path d="M12.00 3.10L12.85 3.41L13.56 4.15L14.14 4.95L14.72 5.44L15.47 5.51L16.44 5.35L17.48 5.32L18.29 5.71L18.68 6.52L18.65 7.56L18.49 8.53L18.56 9.28L19.05 9.86L19.85 10.44L20.59 11.15L20.90 12.00L20.59 12.85L19.85 13.56L19.05 14.14L18.56 14.72L18.49 15.47L18.65 16.44L18.68 17.48L18.29 18.29L17.48 18.68L16.44 18.65L15.47 18.49L14.72 18.56L14.14 19.05L13.56 19.85L12.85 20.59L12.00 20.90L11.15 20.59L10.44 19.85L9.86 19.05L9.28 18.56L8.53 18.49L7.56 18.65L6.52 18.68L5.71 18.29L5.32 17.48L5.35 16.44L5.51 15.47L5.44 14.72L4.95 14.14L4.15 13.56L3.41 12.85L3.10 12.00L3.41 11.15L4.15 10.44L4.95 9.86L5.44 9.28L5.51 8.53L5.35 7.56L5.32 6.52L5.71 5.71L6.52 5.32L7.56 5.35L8.53 5.51L9.28 5.44L9.86 4.95L10.44 4.15L11.15 3.41L12.00 3.10z"/><circle cx="12" cy="12" r="2.900"/></svg><div class="t" style="left:110.0px;top:601.3px;font-size:26px;color:#6c717e;letter-spacing:0.86px;">Settings</div><svg class="i" style="left:410.2px;top:604.4px" width="36" height="36" viewBox="0 0 24 24" fill="none" stroke="#14181f" stroke-width="2.75" stroke-linecap="round" stroke-linejoin="round" ><path d="M6.240 14.350L12 9.650L17.760 14.350" stroke-linejoin="miter"/></svg><div class="t" style="left:110.0px;top:687.5px;font-size:26px;color:#6c717e;letter-spacing:0.77px;">Products</div><div class="t" style="left:110.0px;top:773.7px;font-size:26px;color:#6c717e;letter-spacing:-0.77px;">Fees</div><div class="t" style="left:110.0px;top:859.9px;font-size:26px;color:#6c717e;letter-spacing:0.77px;">Platforms</div><div class="t" style="left:110.0px;top:946.0px;font-size:26px;color:#6c717e;letter-spacing:0.30px;">Symbol Mapping</div><div class="t" style="left:110.0px;top:1032.2px;font-size:26px;color:#6c717e;">Copy at MA Price</div><div class="t" style="left:110.0px;top:1118.4px;font-size:26px;color:#14181f;letter-spacing:0.20px;">Email Templates</div><div class="t" style="left:110.0px;top:1204.6px;font-size:26px;color:#6c717e;letter-spacing:0.09px;">SMTP Settings</div><div class="t" style="left:110.0px;top:1290.8px;font-size:26px;color:#6c717e;letter-spacing:0.71px;">Synchronization</div><div class="t" style="left:110.0px;top:1376.9px;font-size:26px;color:#6c717e;letter-spacing:0.05px;">Managers</div><div class="t" style="left:110.0px;top:1463.1px;font-size:26px;color:#6c717e;letter-spacing:0.46px;">Side Auth</div><div class="t" style="left:110.0px;top:1549.3px;font-size:26px;color:#6c717e;">Distribute balance…</div><svg class="i" style="left:45.5px;top:1635.1px" width="42" height="42" viewBox="0 0 24 24" fill="none" stroke="#f7f8f9" stroke-width="2.5" stroke-linecap="round" stroke-linejoin="round" ><path d="M6 3h12v18H6zM9 8h6M9 12h6M9 16h3"/></svg><div class="t" style="left:110.0px;top:1635.5px;font-size:26px;color:#f7f8f9;">Reports</div><svg class="i" style="left:410.2px;top:1638.6px" width="36" height="36" viewBox="0 0 24 24" fill="none" stroke="#f7f8f9" stroke-width="2.75" stroke-linecap="round" stroke-linejoin="round" ><path d="M6.240 9.650L12 14.350L17.760 9.650" stroke-linejoin="miter"/></svg><svg class="i" style="left:45.5px;top:1721.2px" width="42" height="42" viewBox="0 0 24 24" fill="none" stroke="#f7f8f9" stroke-width="2.5" stroke-linecap="round" stroke-linejoin="round" ><path d="M6 3h8l4 4v14H6zM9 11h6M9 15h4"/></svg><div class="t" style="left:110.0px;top:1721.7px;font-size:26px;color:#f7f8f9;">Logs</div><svg class="i" style="left:410.2px;top:1724.7px" width="36" height="36" viewBox="0 0 24 24" fill="none" stroke="#f7f8f9" stroke-width="2.75" stroke-linecap="round" stroke-linejoin="round" ><path d="M6.240 9.650L12 14.350L17.760 9.650" stroke-linejoin="miter"/></svg><div class="b" style="left:463.2px;top:148px;width:7.6px;height:466px;border-radius:4px;background:#c9ccd4"></div><div class="b" style="left:426.3px;top:682px;width:1.6px;height:896px;background:#c9ceda"></div><div class="b" style="left:0;top:1095px;width:2.6px;height:86px;background:#3083ff"></div><svg class="i" style="left:44.0px;top:1665.0px" width="42" height="42" viewBox="0 0 24 24" fill="none" stroke="#6e7380" stroke-width="3" stroke-linecap="round" stroke-linejoin="round" ><path d="M13.200 3.300a8.600 8.600 0 1 0 7.400 13.400a7.600 7.600 0 0 1-7.400-13.400z"/></svg><div class="t" style="left:110.0px;top:1665.4px;font-size:26px;color:#6c717e;letter-spacing:-0.17px;">Dark Theme</div><div class="b" style="left:359px;top:1669px;width:69px;height:34px;border-radius:17px;background:#e6e9ee"></div><div class="b" style="left:363.3px;top:1673px;width:26px;height:26px;border-radius:13px;background:#6b6f7b"></div><svg class="i" style="left:45.0px;top:1751.0px" width="42" height="42" viewBox="0 0 24 24" fill="none" stroke="#6e7380" stroke-width="2.5" stroke-linecap="round" stroke-linejoin="round" ><circle cx="12" cy="12" r="8.600"/><path d="M12 3.500v17M4.200 9.100h15.600M4.200 14.900h15.600" stroke-width="1.500" stroke-linecap="butt"/><ellipse cx="12" cy="12" rx="4" ry="8.500" stroke-width="1.500"/></svg><div class="t" style="left:110.0px;top:1751.4px;font-size:26px;color:#6c717e;letter-spacing:0.33px;">Language</div><div class="t" style="left:302.0px;top:1751.4px;font-size:26px;color:#14181f;letter-spacing:0.20px;">English</div><svg class="i" style="left:393.0px;top:1754.5px" width="36" height="36" viewBox="0 0 24 24" fill="none" stroke="#6e7380" stroke-width="2.75" stroke-linecap="round" stroke-linejoin="round" ><path d="M6.240 9.650L12 14.350L17.760 9.650" stroke-linejoin="miter"/></svg><div class="b" style="left:40.8px;top:1832.3px;width:51px;height:51px;border-radius:26px;background:#e6e9ee"></div><div class="t" style="left:52.3px;top:1837.3px;font-size:18.5px;color:#14181f;letter-spacing:2.60px;">PR</div><div class="t" style="left:110.0px;top:1837.4px;font-size:26px;color:#6c717e;letter-spacing:0.45px;">projects@b2broker.net</div><svg class="i" style="left:47.5px;top:1925.7px" width="38" height="38" viewBox="0 0 24 24" fill="none" stroke="#6e7380" stroke-width="3.0" stroke-linecap="round" stroke-linejoin="round" ><path d="M10.650 7.050L6.950 12l3.700 4.950M17.050 7.050L13.350 12l3.700 4.950" stroke-linejoin="miter"/></svg><div class="t" style="left:110.0px;top:1923.4px;font-size:26px;color:#6c717e;letter-spacing:-0.17px;">Collapse</div></div><div class="main"><div class="t" style="left:534.0px;top:41.8px;font-size:38px;color:#6c717e;letter-spacing:0.92px;">Email Templates</div><svg class="i" style="left:848.9px;top:47.5px" width="28" height="28" viewBox="0 0 24 24" fill="none" stroke="#c5c8cf" stroke-width="3.4" stroke-linecap="round" stroke-linejoin="round" ><path d="M9 4.650L15.100 12L9 19.350" stroke-linejoin="miter"/></svg><div class="t" style="left:897.0px;top:41.8px;font-size:38px;color:#14181f;font-weight:700;letter-spacing:0.74px;">Generate Templates</div><div class="t" style="left:534.0px;top:148.8px;font-size:26px;color:#6c717e;letter-spacing:0.22px;">Logo</div><div class="b" style="left:534px;top:208.5px;width:379px;height:120.5px;box-sizing:border-box;border:2px solid #d2d6df;border-radius:9px"></div><svg class="i" style="left:600.0px;top:241.0px" width="58.3" height="59.9" viewBox="0 0 58.3 59.9"><circle cx="29.2" cy="9.6" r="9.6" fill="#3d8bff"/><circle cx="48.7" cy="9.6" r="9.6" fill="#3d8bff"/><circle cx="9.6" cy="30.0" r="9.6" fill="#2e45d8"/><circle cx="29.2" cy="30.0" r="9.6" fill="#3d8bff"/><circle cx="48.7" cy="30.0" r="9.6" fill="#3d8bff"/><circle cx="9.6" cy="50.3" r="9.6" fill="#2e45d8"/><circle cx="29.2" cy="50.3" r="9.6" fill="#2e45d8"/></svg><div class="t" style="left:680.0px;top:251.5px;font-size:36.5px;color:#24272d;letter-spacing:-0.32px;-webkit-text-stroke:1.9px #24272d;">B2COPY</div><svg class="i" style="left:949.8px;top:218.5px" width="31" height="31" viewBox="0 0 24 24" fill="none" stroke="#6e7380" stroke-width="3.1" stroke-linecap="round" stroke-linejoin="round" ><path d="M4 20l1.700-6L16.200 3.600a2.300 2.300 0 0 1 3.300 0l0.900 0.900a2.300 2.300 0 0 1 0 3.300L10 18.300z"/></svg><svg class="i" style="left:949.9px;top:287.5px" width="31" height="31" viewBox="0 0 24 24" fill="none" stroke="#6e7380" stroke-width="3.0" stroke-linecap="round" stroke-linejoin="round" ><path d="M3.400 6.400h17.200"/><path d="M7.600 5.400V4.400a1.200 1.200 0 0 1 1.200-1.200h6.400a1.200 1.200 0 0 1 1.200 1.200v1" fill="#6e7380"/><path d="M5.200 6.600v13.200a1 1 0 0 0 1 1h11.600a1 1 0 0 0 1-1V6.600"/><path d="M12 11.600v5" /></svg><div class="t" style="left:534.0px;top:373.3px;font-size:26px;color:#6c717e;letter-spacing:-0.11px;">Logo link URL</div><div class="b" style="left:534px;top:424.0px;width:802px;height:69px;border-radius:8px;background:#e6e9ee"></div><div class="t" style="left:560.0px;top:438.3px;font-size:26px;color:#14181f;letter-spacing:0.87px;">b2copy-standalone-website.webflow.io</div><svg class="i" style="left:1277.8px;top:443.5px" width="30" height="30" viewBox="0 0 24 24" fill="none" stroke="#6a6f7b" stroke-width="2.9" stroke-linecap="round" stroke-linejoin="round" ><path d="M5 5l14 14M19 5l-14 14"/></svg><div class="t" style="left:534.0px;top:537.3px;font-size:26px;color:#6c717e;letter-spacing:0.43px;">Email of Technical Support</div><div class="b" style="left:534px;top:588.0px;width:802px;height:69px;border-radius:8px;background:#e6e9ee"></div><div class="t" style="left:560.0px;top:602.3px;font-size:26px;color:#14181f;letter-spacing:0.63px;">technicalsupport@b2broker.com</div><svg class="i" style="left:1277.8px;top:607.5px" width="30" height="30" viewBox="0 0 24 24" fill="none" stroke="#6a6f7b" stroke-width="2.9" stroke-linecap="round" stroke-linejoin="round" ><path d="M5 5l14 14M19 5l-14 14"/></svg><div class="t" style="left:1380.0px;top:537.3px;font-size:26px;color:#6c717e;letter-spacing:0.10px;">Company Name</div><div class="b" style="left:1380px;top:588.0px;width:802px;height:69px;border-radius:8px;background:#e6e9ee"></div><div class="t" style="left:1406.0px;top:602.3px;font-size:26px;color:#14181f;letter-spacing:-0.10px;">ABS Trading</div><div class="t" style="left:534.0px;top:731.9px;font-size:32px;color:#14181f;font-weight:700;letter-spacing:-0.57px;">Colors</div><div class="t" style="left:534.0px;top:788.3px;font-size:26px;color:#6c717e;letter-spacing:0.25px;">Use HEX format for colors</div><div class="t" style="left:914.0px;top:727.3px;font-size:26px;color:#6c717e;letter-spacing:1.00px;">Accent</div><div class="b" style="left:914px;top:778.0px;width:284.8px;height:69px;border-radius:8px;background:#e6e9ee"></div><div class="t" style="left:940.0px;top:792.3px;font-size:26px;color:#14181f;letter-spacing:0.28px;">5599FF</div><svg class="i" style="left:1140.6px;top:797.5px" width="30" height="30" viewBox="0 0 24 24" fill="none" stroke="#6a6f7b" stroke-width="2.9" stroke-linecap="round" stroke-linejoin="round" ><path d="M5 5l14 14M19 5l-14 14"/></svg><div class="b" style="left:1216.5px;top:796px;width:33.4px;height:33.4px;background:#eef0f4"></div><div class="b" style="left:1218.2px;top:797.7px;width:30px;height:30px;background:#3083ff"></div><div class="t" style="left:534.0px;top:882.8px;font-size:26px;color:#14181f;font-weight:700;letter-spacing:-0.26px;">Dark Theme</div><div class="t" style="left:1380.0px;top:882.8px;font-size:26px;color:#14181f;font-weight:700;letter-spacing:-0.06px;">Light Theme</div><div class="t" style="left:534.0px;top:951.8px;font-size:26px;color:#6c717e;letter-spacing:0.53px;">Background</div><div class="b" style="left:534px;top:1002.5px;width:284.8px;height:69px;border-radius:8px;background:#e6e9ee"></div><div class="t" style="left:560.0px;top:1016.8px;font-size:26px;color:#14181f;letter-spacing:-1.74px;">14181F</div><svg class="i" style="left:760.6px;top:1022.0px" width="30" height="30" viewBox="0 0 24 24" fill="none" stroke="#6a6f7b" stroke-width="2.9" stroke-linecap="round" stroke-linejoin="round" ><path d="M5 5l14 14M19 5l-14 14"/></svg><div class="b" style="left:836.5px;top:1020.5px;width:33.4px;height:33.4px;background:#eef0f4"></div><div class="b" style="left:838.2px;top:1022.2px;width:30px;height:30px;background:#ffffff"></div><div class="t" style="left:914.0px;top:951.8px;font-size:26px;color:#6c717e;letter-spacing:-0.45px;">Card</div><div class="b" style="left:914px;top:1002.5px;width:284.8px;height:69px;border-radius:8px;background:#e6e9ee"></div><div class="t" style="left:940.0px;top:1016.8px;font-size:26px;color:#14181f;letter-spacing:0.07px;">1B2028</div><svg class="i" style="left:1140.6px;top:1022.0px" width="30" height="30" viewBox="0 0 24 24" fill="none" stroke="#6a6f7b" stroke-width="2.9" stroke-linecap="round" stroke-linejoin="round" ><path d="M5 5l14 14M19 5l-14 14"/></svg><div class="b" style="left:1216.5px;top:1020.5px;width:33.4px;height:33.4px;background:#eef0f4"></div><div class="b" style="left:1218.2px;top:1022.2px;width:30px;height:30px;background:#f5f5f7"></div><div class="t" style="left:1380.0px;top:951.8px;font-size:26px;color:#6c717e;letter-spacing:0.53px;">Background</div><div class="b" style="left:1380px;top:1002.5px;width:284.8px;height:69px;border-radius:8px;background:#e6e9ee"></div><div class="t" style="left:1406.0px;top:1016.8px;font-size:26px;color:#14181f;letter-spacing:-1.16px;">FFFFFF</div><svg class="i" style="left:1606.6px;top:1022.0px" width="30" height="30" viewBox="0 0 24 24" fill="none" stroke="#6a6f7b" stroke-width="2.9" stroke-linecap="round" stroke-linejoin="round" ><path d="M5 5l14 14M19 5l-14 14"/></svg><div class="b" style="left:1682.5px;top:1020.5px;width:33.4px;height:33.4px;background:#eef0f4"></div><div class="b" style="left:1684.2px;top:1022.2px;width:30px;height:30px;background:#ffffff"></div><div class="t" style="left:1760.0px;top:951.8px;font-size:26px;color:#6c717e;letter-spacing:-0.45px;">Card</div><div class="b" style="left:1760px;top:1002.5px;width:284.8px;height:69px;border-radius:8px;background:#e6e9ee"></div><div class="t" style="left:1786.0px;top:1016.8px;font-size:26px;color:#14181f;">F5F5F5</div><svg class="i" style="left:1986.6px;top:1022.0px" width="30" height="30" viewBox="0 0 24 24" fill="none" stroke="#6a6f7b" stroke-width="2.9" stroke-linecap="round" stroke-linejoin="round" ><path d="M5 5l14 14M19 5l-14 14"/></svg><div class="b" style="left:2062.5px;top:1020.5px;width:33.4px;height:33.4px;background:#eef0f4"></div><div class="b" style="left:2064.2px;top:1022.2px;width:30px;height:30px;background:#f6f6f7"></div><div class="t" style="left:534.0px;top:1116.3px;font-size:26px;color:#6c717e;letter-spacing:0.15px;">Text Main</div><div class="b" style="left:534px;top:1166.5px;width:284.8px;height:69px;border-radius:8px;background:#e6e9ee"></div><div class="t" style="left:560.0px;top:1180.8px;font-size:26px;color:#14181f;letter-spacing:-1.16px;">FFFFFF</div><svg class="i" style="left:760.6px;top:1186.0px" width="30" height="30" viewBox="0 0 24 24" fill="none" stroke="#6a6f7b" stroke-width="2.9" stroke-linecap="round" stroke-linejoin="round" ><path d="M5 5l14 14M19 5l-14 14"/></svg><div class="b" style="left:836.5px;top:1184.5px;width:33.4px;height:33.4px;background:#eef0f4"></div><div class="b" style="left:838.2px;top:1186.2px;width:30px;height:30px;background:#14181f"></div><div class="t" style="left:914.0px;top:1116.3px;font-size:26px;color:#6c717e;letter-spacing:0.45px;">Text Secondary</div><div class="b" style="left:914px;top:1166.5px;width:284.8px;height:69px;border-radius:8px;background:#e6e9ee"></div><div class="t" style="left:940.0px;top:1180.8px;font-size:26px;color:#14181f;letter-spacing:0.48px;">878D95</div><svg class="i" style="left:1140.6px;top:1186.0px" width="30" height="30" viewBox="0 0 24 24" fill="none" stroke="#6a6f7b" stroke-width="2.9" stroke-linecap="round" stroke-linejoin="round" ><path d="M5 5l14 14M19 5l-14 14"/></svg><div class="b" style="left:1216.5px;top:1184.5px;width:33.4px;height:33.4px;background:#eef0f4"></div><div class="b" style="left:1218.2px;top:1186.2px;width:30px;height:30px;background:#6b6f7b"></div><div class="t" style="left:1380.0px;top:1116.3px;font-size:26px;color:#6c717e;letter-spacing:0.15px;">Text Main</div><div class="b" style="left:1380px;top:1166.5px;width:284.8px;height:69px;border-radius:8px;background:#e6e9ee"></div><div class="t" style="left:1406.0px;top:1180.8px;font-size:26px;color:#14181f;letter-spacing:1.45px;">343434</div><svg class="i" style="left:1606.6px;top:1186.0px" width="30" height="30" viewBox="0 0 24 24" fill="none" stroke="#6a6f7b" stroke-width="2.9" stroke-linecap="round" stroke-linejoin="round" ><path d="M5 5l14 14M19 5l-14 14"/></svg><div class="b" style="left:1682.5px;top:1184.5px;width:33.4px;height:33.4px;background:#eef0f4"></div><div class="b" style="left:1684.2px;top:1186.2px;width:30px;height:30px;background:#14181f"></div><div class="t" style="left:1760.0px;top:1116.3px;font-size:26px;color:#6c717e;letter-spacing:0.45px;">Text Secondary</div><div class="b" style="left:1760px;top:1166.5px;width:284.8px;height:69px;border-radius:8px;background:#e6e9ee"></div><div class="t" style="left:1786.0px;top:1180.8px;font-size:26px;color:#14181f;letter-spacing:2.15px;">808080</div><svg class="i" style="left:1986.6px;top:1186.0px" width="30" height="30" viewBox="0 0 24 24" fill="none" stroke="#6a6f7b" stroke-width="2.9" stroke-linecap="round" stroke-linejoin="round" ><path d="M5 5l14 14M19 5l-14 14"/></svg><div class="b" style="left:2062.5px;top:1184.5px;width:33.4px;height:33.4px;background:#eef0f4"></div><div class="b" style="left:2064.2px;top:1186.2px;width:30px;height:30px;background:#6b6f7b"></div></div></div>
</div></body></html>
